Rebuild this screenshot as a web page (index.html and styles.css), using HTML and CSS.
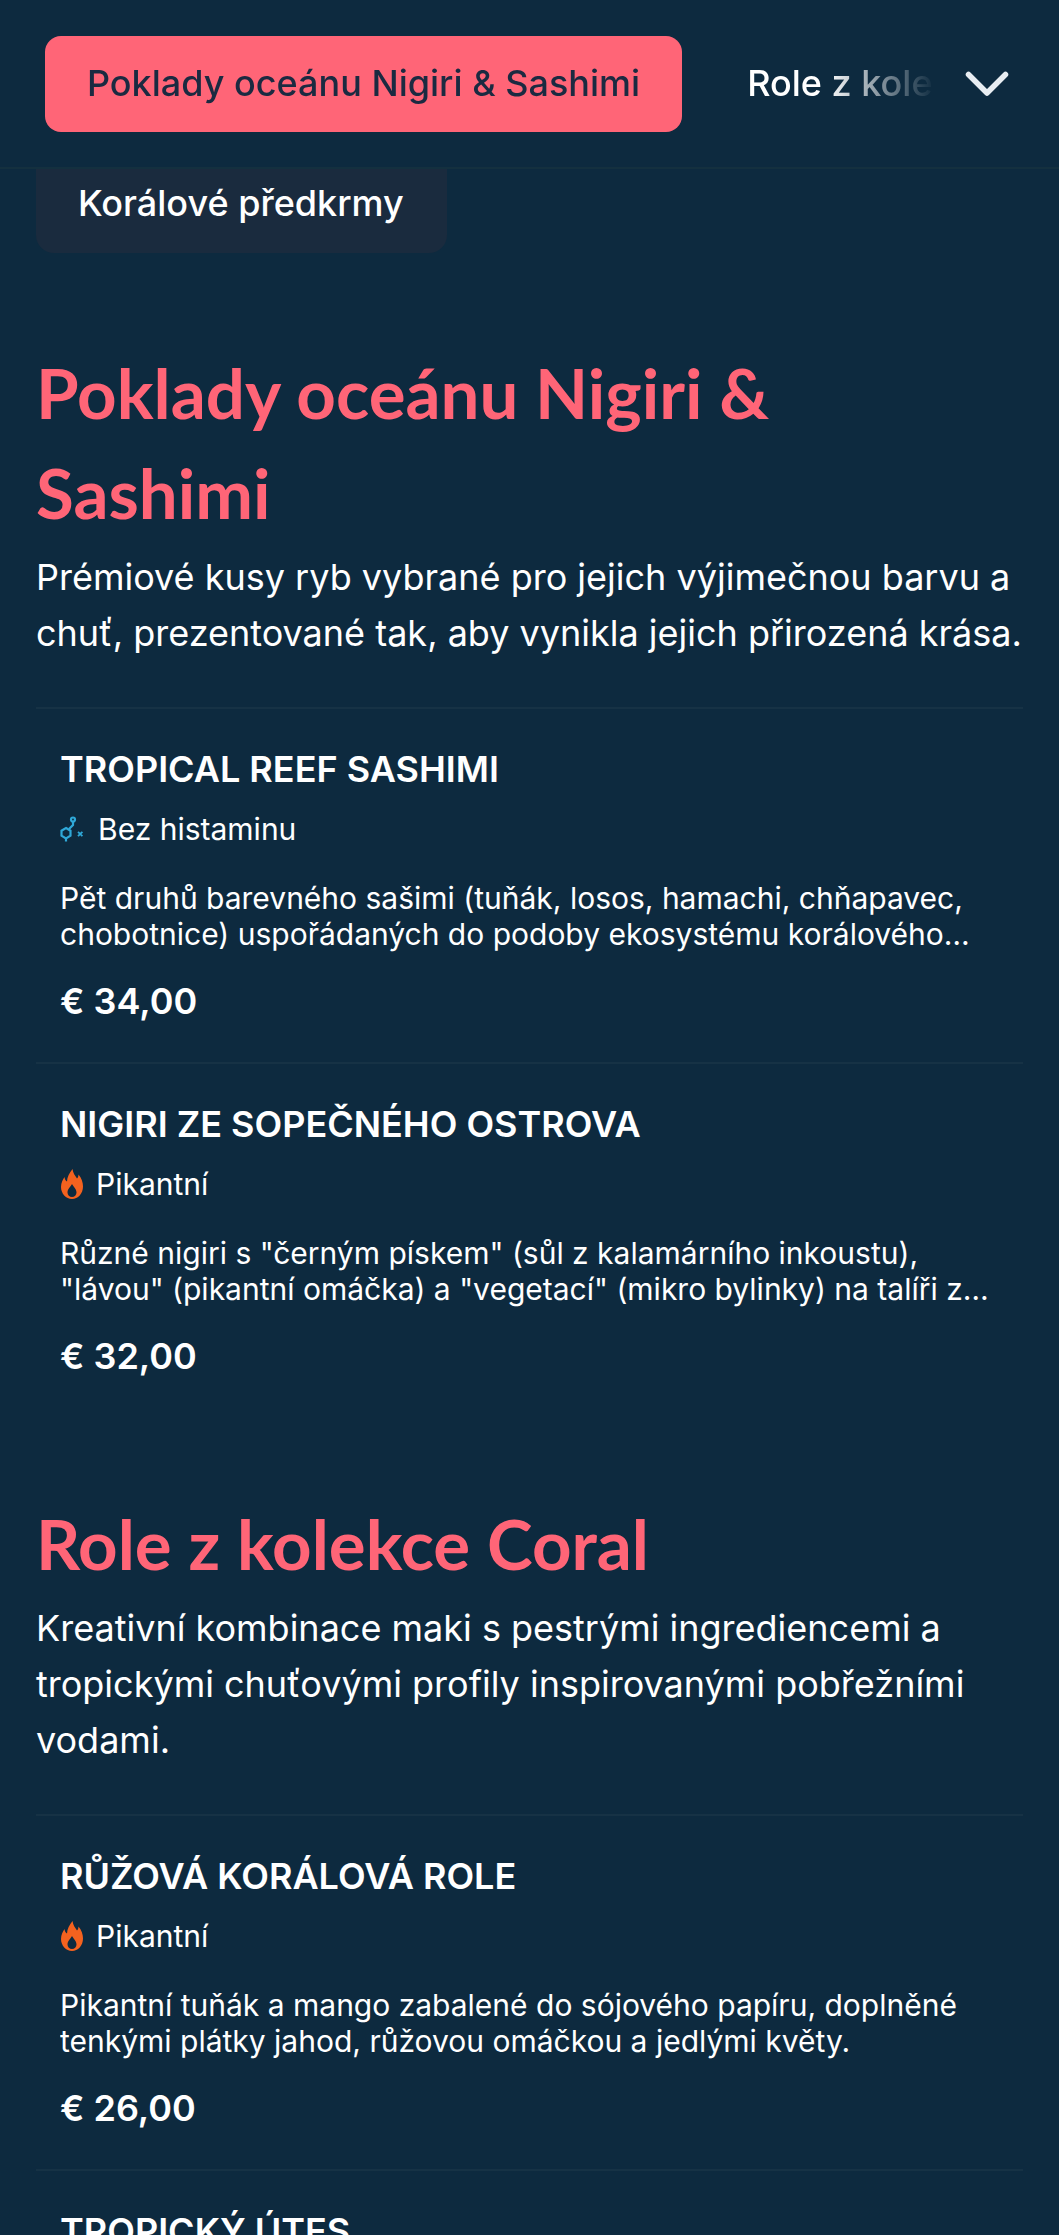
FILE: index.html
```html
<!DOCTYPE html>
<html lang="cs">
<head>
<meta charset="utf-8">
<title>Menu</title>
<link rel="stylesheet" href="styles.css">
</head>
<body>
<div class="page">
  <header class="nav">
    <div class="nav-scroll">
      <a class="pill active">Poklady oceánu Nigiri &amp; Sashimi</a>
      <a class="pill">Role z kolekce Coral</a>
    </div>
    <svg class="chevron" viewBox="0 0 44 26" width="44" height="26"><path d="M3.500 3.500 L22 22 L40.500 3.500" fill="none" stroke="#e8edf2" stroke-width="5.500" stroke-linecap="round" stroke-linejoin="round"/></svg>
  </header>
  <main class="content">
    <a class="chip">Korálové předkrmy</a>

    <section class="section first">
      <h2>Poklady oceánu Nigiri &amp; Sashimi</h2>
      <p class="lead">Prémiové kusy ryb vybrané pro jejich výjimečnou barvu a chuť, prezentované tak, aby vynikla jejich přirozená krása.</p>
      <article class="item">
        <h3>TROPICAL REEF SASHIMI</h3>
        <div class="tag">
          <svg class="tag-icon" viewBox="0 0 26 26" width="26" height="26"><g fill="none" stroke="#2fa8d8" stroke-width="2.200"><path d="M6 12l4.500 2.700v5L6 22.400l-4.500-2.700v-5z"/><path d="M6 22.400V25.500M9 13l4-4V6"/><circle cx="13" cy="3.500" r="2"/></g><path d="M18 15.800l4.400 4.400M22.400 15.800l-4.400 4.400" fill="none" stroke="#2fa8d8" stroke-width="1.800"/></svg>
          <span>Bez histaminu</span>
        </div>
        <p class="desc">Pět druhů barevného sašimi (tuňák, losos, hamachi, chňapavec, chobotnice) uspořádaných do podoby ekosystému korálového útesu s jedlými květy a mikro bylinkami.</p>
        <div class="price">€ 34,00</div>
      </article>
      <article class="item">
        <h3>NIGIRI ZE SOPEČNÉHO OSTROVA</h3>
        <div class="tag">
          <svg class="tag-icon" viewBox="0 0 24 30" width="24" height="30"><path fill="#f4621f" fill-rule="evenodd" d="M12.500 0c0.500 4 2.500 6.500 4.500 9.500 1-1 1.500-2.500 1.500-4 3 3.500 4.500 8 4.500 12 0 7-5 12.500-11 12.500S1 24.500 1 18c0-4.500 2-7.500 3.500-10 0.300 2 1 3.500 2.500 4.500C7 8 9.500 4 12.500 0zM12 15c-1.500 3-4.500 5-4.500 8.500 0 2.500 2 4.500 4.500 4.500s4.500-2 4.500-4.500c0-3.500-3-5.500-4.500-8.500z"/></svg>
          <span>Pikantní</span>
        </div>
        <p class="desc">Různé nigiri s "černým pískem" (sůl z kalamárního inkoustu), "lávou" (pikantní omáčka) a "vegetací" (mikro bylinky) na talíři z lávového kamene s wasabi a nakládaným zázvorem.</p>
        <div class="price">€ 32,00</div>
      </article>
    </section>

    <section class="section">
      <h2>Role z kolekce Coral</h2>
      <p class="lead">Kreativní kombinace maki s pestrými ingrediencemi a tropickými chuťovými profily inspirovanými pobřežními vodami.</p>
      <article class="item">
        <h3>RŮŽOVÁ KORÁLOVÁ ROLE</h3>
        <div class="tag">
          <svg class="tag-icon" viewBox="0 0 24 30" width="24" height="30"><path fill="#f4621f" fill-rule="evenodd" d="M12.500 0c0.500 4 2.500 6.500 4.500 9.500 1-1 1.500-2.500 1.500-4 3 3.500 4.500 8 4.500 12 0 7-5 12.500-11 12.500S1 24.500 1 18c0-4.500 2-7.500 3.500-10 0.300 2 1 3.500 2.500 4.500C7 8 9.500 4 12.500 0zM12 15c-1.500 3-4.500 5-4.500 8.500 0 2.500 2 4.500 4.500 4.500s4.500-2 4.500-4.500c0-3.500-3-5.500-4.500-8.500z"/></svg>
          <span>Pikantní</span>
        </div>
        <p class="desc">Pikantní tuňák a mango zabalené do sójového papíru, doplněné tenkými plátky jahod, růžovou omáčkou a jedlými květy.</p>
        <div class="price">€ 26,00</div>
      </article>
      <article class="item">
        <h3>TROPICKÝ ÚTES</h3>
      </article>
    </section>
  </main>
</div>
</body>
</html>
```
FILE: styles.css
```css
* { box-sizing: border-box; }
html, body { margin: 0; padding: 0; background: #0d2a3f; }
.page {
  height: 2235px;
  overflow: hidden;
  font-family: Inter, "Liberation Sans", sans-serif;
  color: #fff;
}
.nav {
  height: 169px;
  display: flex;
  align-items: center;
  border-bottom: 2px solid #14303f;
  background: #0d2a3f;
  position: relative;
}
.nav-scroll {
  width: 942px;
  padding-left: 45px;
  display: flex;
  gap: 23px;
  overflow: hidden;
  -webkit-mask-image: linear-gradient(to right, #000 826px, transparent 935px);
  mask-image: linear-gradient(to right, #000 826px, transparent 935px);
  flex: none;
}
.pill {
  flex: none;
  height: 96px;
  display: flex;
  align-items: center;
  padding: 0 42px 2px;
  border-radius: 16px;
  font-size: 36px;
  font-weight: 500;
  white-space: nowrap;
}
.pill.active { background: #ff6577; color: #1b2a41; }
.chevron { margin-left: 23px; flex: none; }
.content { padding: 0 36px; }
.chip {
  display: inline-flex;
  align-items: center;
  height: 84px;
  padding: 0 43px 16px 42px;
  background: #1a2b3e;
  border-radius: 0 0 18px 18px;
  font-size: 36px;
  font-weight: 500;
}
.section { margin-top: 77px; }
.section.first { margin-top: 90px; }
h2 {
  margin: 0 0 6px;
  max-width: 900px;
  font-family: Lato, sans-serif;
  font-size: 69px;
  line-height: 100px;
  font-weight: 700;
  color: #ff6577;
}
.lead {
  margin: 0 0 46px;
  font-size: 36px;
  line-height: 56px;
  font-weight: 400;
}
.item {
  border-top: 2px solid #163245;
  padding: 39px 24px 0;
  height: 355px;
}
h3 {
  margin: 0;
  font-size: 36px;
  line-height: 42px;
  font-weight: 600;
}
.tag {
  display: flex;
  align-items: center;
  gap: 12px;
  height: 42px;
  margin-top: 18px;
  font-size: 30px;
}
.tag-icon { flex: none; }
.desc {
  margin: 30px 0 0;
  font-size: 30px;
  line-height: 36px;
  display: -webkit-box;
  -webkit-line-clamp: 2;
  -webkit-box-orient: vertical;
  overflow: hidden;
}
.price {
  margin-top: 27px;
  font-size: 36px;
  line-height: 44px;
  font-weight: 600;
}
```
